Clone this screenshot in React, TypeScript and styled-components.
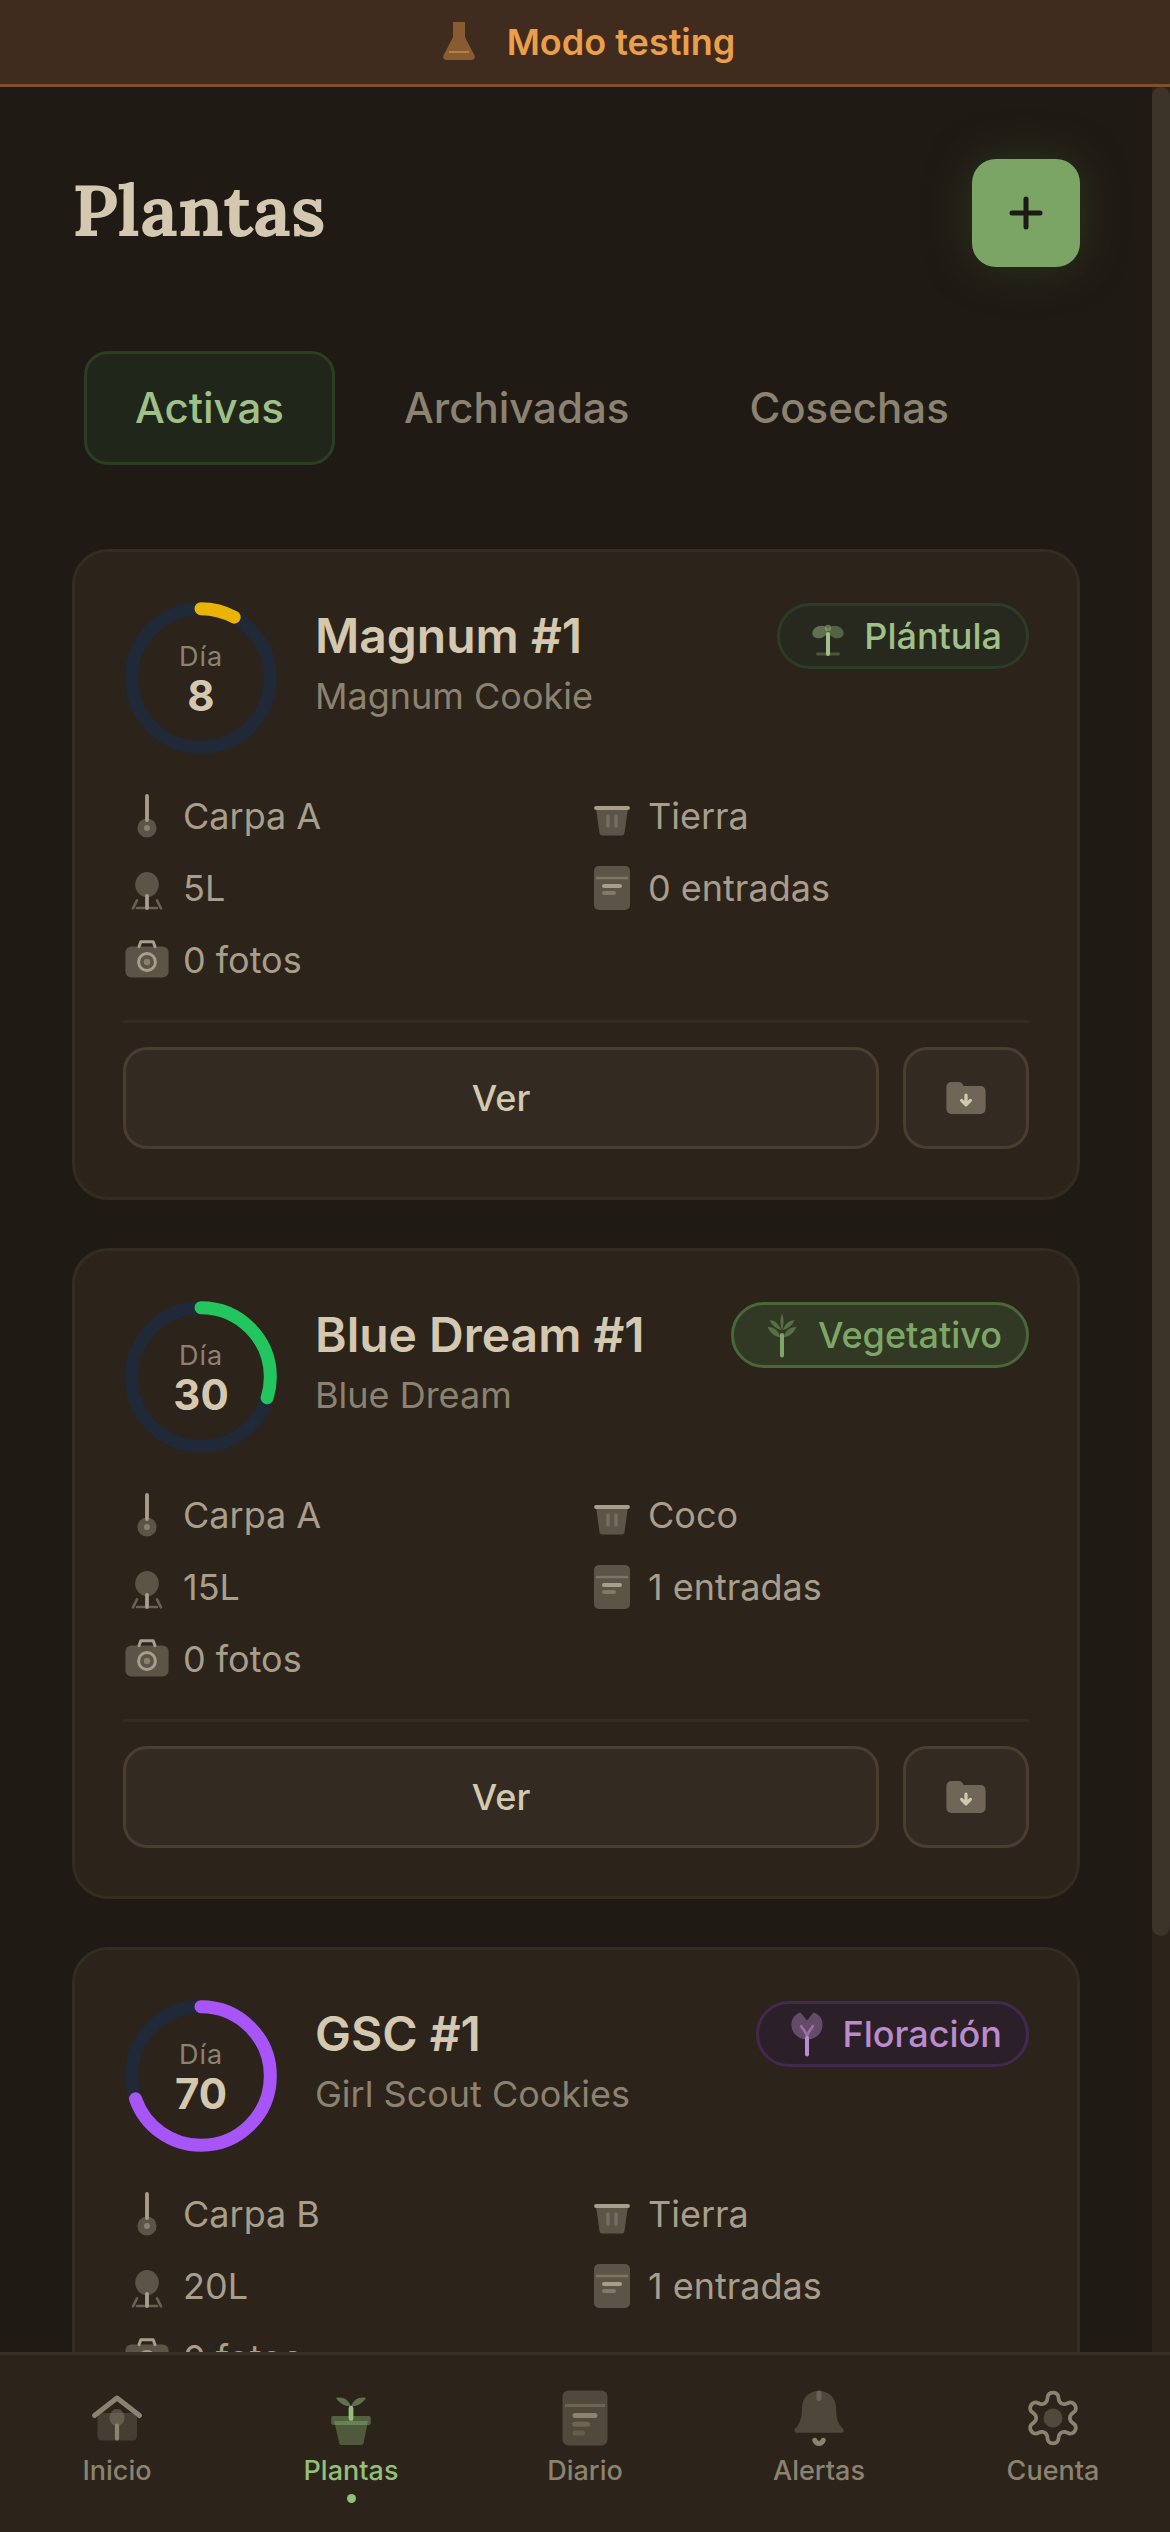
import React from "react";
import styled, { createGlobalStyle, css } from "styled-components";

const color = {
  page: "#1f1a14",
  surface: "#2c241b",
  raised: "#332b21",
  line: "#332c21",
  lineStrong: "#4a3e31",
  cream: "#d4c9b0",
  soft: "#a89e8b",
  muted: "#8c8270",
  green: "#7ba564",
  leaf: "#92bf7a",
  amber: "#eb9f4a",
};

const GlobalStyle = createGlobalStyle`
  *, *::before, *::after { box-sizing: border-box; }
  body {
    margin: 0;
    background: ${color.page};
    color: ${color.cream};
    font-family: Inter, "Liberation Sans", sans-serif;
    font-size: 36px;
    line-height: 48px;
  }
  button { font: inherit; color: inherit; cursor: pointer; margin: 0; }
  h1, h2, p, ul, dl { margin: 0; padding: 0; }
  ul { list-style: none; }
`;

const Shell = styled.div`
  display: grid;
  grid-template-rows: auto minmax(0, 1fr) auto;
  height: 100vh;
`;

const Banner = styled.div`
  display: flex;
  align-items: center;
  justify-content: center;
  gap: 24px;
  padding: 18px 24px;
  background: #402c1e;
  border-bottom: 3px solid #7f5029;
  color: ${color.amber};
  font-weight: 600;
`;

const Viewport = styled.div`
  display: grid;
  grid-template-columns: minmax(0, 1fr) 18px;
  grid-template-rows: minmax(0, 1fr);
`;

const Scroller = styled.main`
  overflow-y: auto;
  padding: 72px 72px 264px;
  scrollbar-width: none;
`;

const ScrollTrack = styled.div`
  background: ${color.surface};
`;

const ScrollThumb = styled.div`
  border-radius: 9px;
  background: #3d3429;
`;

const Header = styled.header`
  display: flex;
  align-items: flex-start;
  justify-content: space-between;
`;

const Title = styled.h1`
  font-family: Lora, "Noto Serif", "Liberation Serif", serif;
  font-size: 72px;
  line-height: 102px;
  font-weight: 700;
`;

const AddButton = styled.button`
  display: grid;
  place-items: center;
  width: 108px;
  height: 108px;
  padding: 0;
  border: 0;
  border-radius: 24px;
  background: ${color.green};
  color: ${color.page};
  box-shadow: 0 0 48px rgba(74, 103, 54, 0.35);
`;

const Tabs = styled.div`
  display: flex;
  gap: 18px;
  margin: 72px 0;
  padding: 12px;
`;

const Tab = styled.button<{ $active?: boolean }>`
  padding: 24px 48px;
  border: 3px solid ${(p) => (p.$active ? "#2b3d25" : "transparent")};
  border-radius: 24px;
  background: ${(p) => (p.$active ? "#20271a" : "transparent")};
  color: ${(p) => (p.$active ? "#9fc088" : color.muted)};
  font-size: 42px;
  line-height: 60px;
  font-weight: 500;
`;

const CardList = styled.ul`
  display: grid;
  gap: 48px;
`;

const Card = styled.li`
  padding: 48px;
  border: 3px solid ${color.line};
  border-radius: 36px;
  background: ${color.surface};
`;

const CardHead = styled.div`
  display: flex;
  gap: 36px;
`;

const Ring = styled.div`
  display: grid;
  flex: none;
  place-items: center;
  width: 156px;
  height: 156px;
  > * { grid-area: 1 / 1; }
`;

const RingText = styled.div`
  display: flex;
  flex-direction: column;
  align-items: center;
`;

const RingLabel = styled.span`
  color: ${color.muted};
  font-size: 27px;
  line-height: 36px;
  letter-spacing: 1px;
`;

const RingValue = styled.span`
  font-size: 42px;
  line-height: 42px;
  font-weight: 700;
`;

const Heading = styled.div`
  flex: 1;
  min-width: 0;
`;

const NameRow = styled.div`
  display: flex;
  align-items: center;
  justify-content: space-between;
  gap: 24px;
`;

const Name = styled.h2`
  font-size: 48px;
  line-height: 72px;
  font-weight: 600;
`;

const Strain = styled.p`
  color: ${color.muted};
`;

type Stage = "plantula" | "vegetativo" | "floracion";

const stageStyle = {
  plantula: css`background: #27291e; border-color: #2b3d25; color: #9fc088;`,
  vegetativo: css`background: #313824; border-color: #486838; color: #7da764;`,
  floracion: css`background: #2b2028; border-color: #43294f; color: #bb8ccb;`,
};

const Badge = styled.span<{ $stage: Stage }>`
  display: flex;
  align-items: center;
  gap: 12px;
  padding: 6px 24px;
  border: 3px solid;
  border-radius: 33px;
  font-weight: 500;
  ${(p) => stageStyle[p.$stage]}
`;

const Facts = styled.ul`
  display: grid;
  grid-template-columns: 1fr 1fr;
  gap: 24px;
  margin: 36px 0;
  color: ${color.soft};
`;

const Fact = styled.li`
  display: flex;
  align-items: center;
  gap: 12px;
`;

const Actions = styled.div`
  display: flex;
  gap: 24px;
  padding-top: 24px;
  border-top: 3px solid ${color.line};
`;

const Action = styled.button<{ $grow?: boolean }>`
  display: grid;
  place-items: center;
  flex: ${(p) => (p.$grow ? 1 : "none")};
  padding: 24px 36px;
  border: 3px solid ${color.lineStrong};
  border-radius: 24px;
  background: ${color.raised};
  color: ${color.cream};
  font-weight: 500;
`;

const Nav = styled.nav`
  display: grid;
  grid-template-columns: repeat(5, 1fr);
  min-height: 180px;
  border-top: 3px solid #383026;
  background: ${color.surface};
`;

const NavLink = styled.a<{ $active?: boolean }>`
  display: flex;
  flex-direction: column;
  align-items: center;
  gap: 3px;
  padding: 33px 0 27px;
  color: ${(p) => (p.$active ? color.leaf : color.muted)};
  font-size: 27px;
  line-height: 40px;
  font-weight: 500;
  text-decoration: none;
`;

const Dot = styled.span`
  width: 9px;
  height: 9px;
  border-radius: 50%;
  background: currentColor;
`;

const Svg = styled.svg<{ $size: number }>`
  display: block;
  flex: none;
  width: ${(p) => p.$size}px;
  height: ${(p) => p.$size}px;
  fill: none;
  stroke-linecap: round;
  stroke-linejoin: round;
`;

function Icon({ size = 48, children }: { size?: number; children: React.ReactNode }) {
  return (
    <Svg $size={size} viewBox="0 0 24 24" aria-hidden="true">
      {children}
    </Svg>
  );
}

const ink = "currentColor";

const FlaskIcon = () => (
  <Icon>
    <path d="M9 2h6v7.6l4.6 8.8c.8 1.400-.1 2.600-1.300 2.600H5.700c-1.200 0-2.100-1.200-1.300-2.600L9 9.600z" fill={ink} opacity=".42" />
    <path d="M7 17h10" stroke={ink} strokeLinecap="butt" opacity=".5" />
  </Icon>
);

const PlusIcon = () => (
  <Icon>
    <path d="M12 5v14M5 12h14" stroke={ink} strokeWidth="2.5" />
  </Icon>
);

const SproutIcon = () => (
  <Icon>
    <ellipse cx="8" cy="10" rx="4" ry="3" transform="rotate(-20 8 10)" fill={ink} opacity=".48" />
    <ellipse cx="16" cy="10" rx="4" ry="3" transform="rotate(20 16 10)" fill={ink} opacity=".38" />
    <circle cx="12" cy="8" r="1.600" fill={ink} opacity=".5" />
    <path d="M6.800 21h10.400" stroke={ink} strokeWidth="1.600" opacity=".3" />
    <path d="M12 11v10" stroke={ink} strokeWidth="2" />
  </Icon>
);

const PalmIcon = () => (
  <Icon>
    <g fill={ink} opacity=".5">
      <path d="M12 1.200c1 2.400 1 5.900 0 8.300-1-2.400-1-5.900 0-8.300z" />
      <path d="M5.800 4.600c2.600-.1 4.700 1.900 5.900 5-2.500-.9-4.900-2.400-5.900-5z" />
      <path d="M18.200 4.600c-2.600-.1-4.700 1.900-5.900 5 2.500-.9 4.900-2.400 5.900-5z" />
      <path d="M4.800 8c3-.2 5.400 1.700 6.600 5.300C8.200 12.700 5.800 10.800 4.800 8z" />
      <path d="M19.200 8c-3-.2-5.400 1.700-6.600 5.300 3.200-.6 5.600-2.500 6.600-5.300z" />
    </g>
    <path d="M12 12v10.200" stroke={ink} strokeWidth="2" />
  </Icon>
);

const FlowerIcon = () => (
  <Icon>
    <path d="M12 5.200 8.700 1.200C6 1.900 4.200 4.300 4.200 7.200c0 4.400 3.400 7.500 7.800 7.500s7.800-3.100 7.800-7.500c0-2.900-1.800-5.300-4.500-6z" fill={ink} opacity=".4" />
    <path d="M12 13.500c-.2-2.300-1.500-3.200-2.900-5.400M12 13.500c.2-2.300 1.500-3.200 2.900-5.400" stroke={ink} strokeWidth="1.300" opacity=".6" />
    <path d="M12 14v8.200" stroke={ink} strokeWidth="2" />
  </Icon>
);

const TentIcon = () => (
  <Icon>
    <circle cx="12" cy="18" r="4.800" fill={ink} opacity=".4" />
    <circle cx="12" cy="18" r="1.500" fill={ink} opacity=".6" />
    <path d="M12 2v12" stroke={ink} strokeWidth="1.900" />
  </Icon>
);

const PotIcon = () => (
  <Icon>
    <path d="M4 8h16l-1.800 12.800a1 1 0 0 1-1 .9H6.800a1 1 0 0 1-1-.9z" fill={ink} opacity=".4" />
    <path d="M10 12v5M14 12v5" stroke={ink} strokeWidth="1.700" opacity=".35" />
    <path d="M4 8h16" stroke={ink} strokeWidth="1.900" />
  </Icon>
);

const VolumeIcon = () => (
  <Icon>
    <ellipse cx="12" cy="10.300" rx="5.900" ry="6.300" fill={ink} opacity=".4" />
    <path d="M7 18.200l-2 4M17 18.200l2 4M7 22h10" stroke={ink} strokeWidth="1.300" opacity=".5" />
    <path d="M12 16v6" stroke={ink} strokeWidth="1.900" />
  </Icon>
);

const NotebookIcon = ({ size, lines = 2 }: { size?: number; lines?: number }) => (
  <Icon size={size}>
    <rect x="3" y="1" width="18" height="22" rx="2.500" fill={ink} opacity=".4" />
    <path d="M4 7h16" stroke={ink} strokeWidth="1.200" strokeLinecap="butt" opacity=".45" />
    <path d="M8 11h8" stroke={ink} strokeWidth="2" />
    <path d="M8 14.500h5" stroke={ink} strokeWidth="2" opacity=".5" />
    {lines > 2 && <path d="M8 18h3" stroke={ink} strokeWidth="2" opacity=".35" />}
  </Icon>
);

const CameraIcon = () => (
  <Icon>
    <rect x="1.200" y="5.200" width="21.600" height="15.600" rx="3" fill={ink} opacity=".4" />
    <path d="M8 5.300 8.900 2.900h6.200L16 5.300" stroke={ink} strokeWidth="1.500" />
    <circle cx="12" cy="13" r="4.200" stroke={ink} strokeWidth="1.500" />
    <circle cx="12" cy="13" r="1.600" fill={ink} opacity=".6" />
  </Icon>
);

const ArchiveIcon = () => (
  <Icon>
    <path d="M2.200 6.500A2.500 2.500 0 0 1 4.700 4h3.600c1 0 1.500.4 1.900 1l.7 1h8.400a2.500 2.500 0 0 1 2.500 2.500v9a2.500 2.500 0 0 1-2.500 2.500H4.700a2.500 2.500 0 0 1-2.500-2.500z" fill={ink} opacity=".38" />
    <path d="M12 10.600v4.600M9.800 13.200l2.200 2.200 2.200-2.200" stroke={ink} strokeWidth="1.600" />
  </Icon>
);

const HomeIcon = () => (
  <Icon size={60}>
    <rect x="4.200" y="10" width="15.800" height="11" rx="1.800" fill={ink} opacity=".28" />
    <ellipse cx="12" cy="11.800" rx="3" ry="3.400" fill={ink} opacity=".45" />
    <path d="M12 15v5.200" stroke={ink} strokeWidth="1.700" />
    <path d="M3 11l9-7 9 7" stroke={ink} strokeWidth="2" />
  </Icon>
);

const PlantIcon = () => (
  <Icon size={60}>
    <path d="M5.300 13.200h13.500L17 22.100a.9.9 0 0 1-.9.700H8.200a.9.900 0 0 1-.9-.7z" fill={ink} opacity=".35" />
    <rect x="4.100" y="11.200" width="15.800" height="3.600" rx=".7" fill={ink} opacity=".4" />
    <path d="M6 4c2.700-.6 4.800.5 5.900 3.200C9.200 7.400 7.400 6 6 4zM18 4c-2.700-.6-4.800.5-5.900 3.200C14.800 7.400 16.600 6 18 4z" fill={ink} opacity=".5" />
    <path d="M12 8v4.200" stroke={ink} strokeWidth="1.900" />
  </Icon>
);

const BellIcon = () => (
  <Icon size={60}>
    <path d="M12 1.200c-4 0-6.800 2.800-6.800 6.800 0 4.500-1.100 6.600-2.700 8.200-.7.800-.3 1.700.7 1.700h17.600c1 0 1.400-.9.700-1.700-1.600-1.600-2.700-3.700-2.700-8.200 0-4-2.800-6.800-6.800-6.800z" fill={ink} opacity=".38" />
    <path d="M12 1.900v2.300" stroke={ink} strokeWidth="2" opacity=".45" />
    <path d="M10.300 20.900c.9 1.700 2.500 1.700 3.400 0" stroke={ink} strokeWidth="2" />
  </Icon>
);

// Six-tooth cog: the radius swings between tooth and valley as the angle turns,
// and the angle is skewed a little so that the teeth get steeper sides.
const gearPath =
  Array.from({ length: 180 }, (_, i) => {
    const turn = (i / 180) * Math.PI * 2;
    const angle = turn + 0.04 * Math.sin(12 * turn);
    const radius = 8.45 + 1.7 * Math.cos(6 * turn);
    const x = 12 + radius * Math.sin(angle);
    const y = 12 - radius * Math.cos(angle);
    return `${i ? "L" : "M"}${x.toFixed(2)} ${y.toFixed(2)}`;
  }).join("") + "Z";

const GearIcon = () => (
  <Icon size={60}>
    <circle cx="12" cy="12" r="3.800" fill={ink} opacity=".4" />
    <path d={gearPath} stroke={ink} strokeWidth="1.500" />
  </Icon>
);

type Plant = {
  name: string;
  strain: string;
  day: number;
  ring: string;
  stage: Stage;
  tent: string;
  medium: string;
  volume: string;
  entries: number;
  photos: number;
};

const plants: Plant[] = [
  { name: "Magnum #1", strain: "Magnum Cookie", day: 8, ring: "#eab308", stage: "plantula", tent: "Carpa A", medium: "Tierra", volume: "5L", entries: 0, photos: 0 },
  { name: "Blue Dream #1", strain: "Blue Dream", day: 30, ring: "#22c55e", stage: "vegetativo", tent: "Carpa A", medium: "Coco", volume: "15L", entries: 1, photos: 0 },
  { name: "GSC #1", strain: "Girl Scout Cookies", day: 70, ring: "#a855f7", stage: "floracion", tent: "Carpa B", medium: "Tierra", volume: "20L", entries: 1, photos: 0 },
];

const stages = {
  plantula: { label: "Plántula", icon: <SproutIcon /> },
  vegetativo: { label: "Vegetativo", icon: <PalmIcon /> },
  floracion: { label: "Floración", icon: <FlowerIcon /> },
};

function DayRing({ day, stroke }: { day: number; stroke: string }) {
  return (
    <Ring>
      <Svg $size={156} viewBox="0 0 36 36" aria-hidden="true">
        <circle cx="18" cy="18" r="16" stroke="#1f2937" strokeWidth="3" />
        <circle
          cx="18"
          cy="18"
          r="16"
          stroke={stroke}
          strokeWidth="3"
          pathLength={100}
          strokeDasharray={`${day} 100`}
          transform="rotate(-90 18 18)"
        />
      </Svg>
      <RingText>
        <RingLabel>Día</RingLabel>
        <RingValue>{day}</RingValue>
      </RingText>
    </Ring>
  );
}

function PlantCard({ plant }: { plant: Plant }) {
  const stage = stages[plant.stage];
  return (
    <Card>
      <CardHead>
        <DayRing day={plant.day} stroke={plant.ring} />
        <Heading>
          <NameRow>
            <Name>{plant.name}</Name>
            <Badge $stage={plant.stage}>
              {stage.icon}
              {stage.label}
            </Badge>
          </NameRow>
          <Strain>{plant.strain}</Strain>
        </Heading>
      </CardHead>
      <Facts>
        <Fact><TentIcon />{plant.tent}</Fact>
        <Fact><PotIcon />{plant.medium}</Fact>
        <Fact><VolumeIcon />{plant.volume}</Fact>
        <Fact><NotebookIcon />{`${plant.entries} entradas`}</Fact>
        <Fact><CameraIcon />{`${plant.photos} fotos`}</Fact>
      </Facts>
      <Actions>
        <Action $grow>Ver</Action>
        <Action aria-label="Archivar"><ArchiveIcon /></Action>
      </Actions>
    </Card>
  );
}

function ScrollArea({ children }: { children: React.ReactNode }) {
  const area = React.useRef<HTMLElement>(null);
  const [thumb, setThumb] = React.useState({ size: 100, start: 0 });

  const measure = React.useCallback(() => {
    const el = area.current;
    if (!el) return;
    setThumb({
      size: (el.clientHeight / el.scrollHeight) * 100,
      start: (el.scrollTop / el.scrollHeight) * el.clientHeight,
    });
  }, []);

  React.useLayoutEffect(() => {
    measure();
    window.addEventListener("resize", measure);
    return () => window.removeEventListener("resize", measure);
  }, [measure]);

  return (
    <Viewport>
      <Scroller ref={area} onScroll={measure}>{children}</Scroller>
      <ScrollTrack aria-hidden="true">
        <ScrollThumb style={{ height: `${thumb.size}%`, transform: `translateY(${thumb.start}px)` }} />
      </ScrollTrack>
    </Viewport>
  );
}

export default function App() {
  return (
    <Shell>
      <GlobalStyle />
      <Banner>
        <FlaskIcon />
        Modo testing
      </Banner>
      <ScrollArea>
        <Header>
          <Title>Plantas</Title>
          <AddButton aria-label="Agregar planta"><PlusIcon /></AddButton>
        </Header>
        <Tabs role="tablist">
          <Tab role="tab" aria-selected="true" $active>Activas</Tab>
          <Tab role="tab" aria-selected="false">Archivadas</Tab>
          <Tab role="tab" aria-selected="false">Cosechas</Tab>
        </Tabs>
        <CardList>
          {plants.map((plant) => (
            <PlantCard key={plant.name} plant={plant} />
          ))}
        </CardList>
      </ScrollArea>
      <Nav aria-label="Principal">
        <NavLink href="#inicio"><HomeIcon />Inicio</NavLink>
        <NavLink href="#plantas" aria-current="page" $active><PlantIcon />Plantas<Dot /></NavLink>
        <NavLink href="#diario"><NotebookIcon size={60} lines={3} />Diario</NavLink>
        <NavLink href="#alertas"><BellIcon />Alertas</NavLink>
        <NavLink href="#cuenta"><GearIcon />Cuenta</NavLink>
      </Nav>
    </Shell>
  );
}
